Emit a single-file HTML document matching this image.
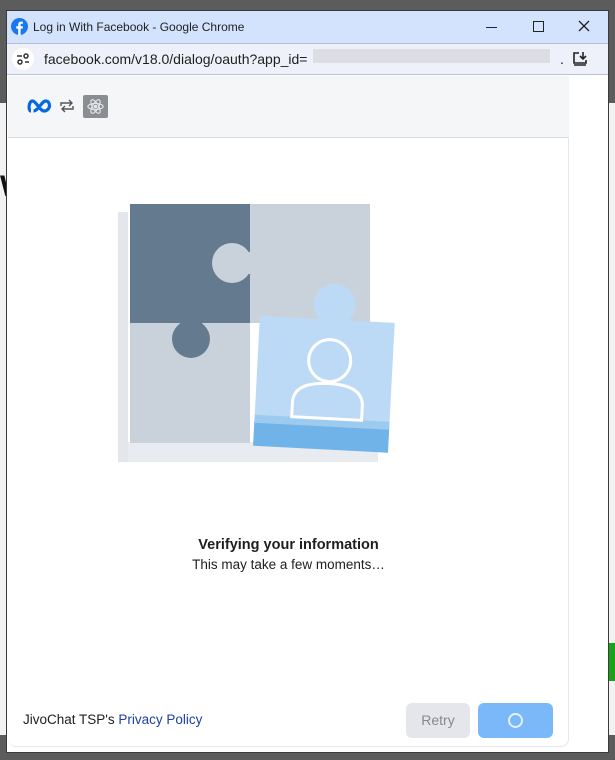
<!DOCTYPE html>
<html><head><style>
*{margin:0;padding:0;box-sizing:border-box}
body{width:615px;height:760px;background:#5c5c5c;position:relative;overflow:hidden;font-family:"Liberation Sans",Arial,sans-serif}
.bgpage{position:absolute;left:0;top:103px;width:615px;height:632px;background:#f2f2f2}
.win{position:absolute;left:6px;top:10px;width:603px;height:743px;background:#fff;border:1px solid #3a3a3a}
.title{height:32px;background:#d3e3fd;position:relative;font-size:12px;color:#1f1f1f}
.addr{height:32px;background:#eef1f9;border-top:1px solid #b8c2d4;border-bottom:1px solid #b8c2d4;position:relative;font-size:14px;color:#1f1f1f}
.hdr{position:absolute;left:1px;top:65px;width:561px;height:62px;background:#f5f6f7;border-bottom:1px solid #dadde1}
.card{position:absolute;left:1px;top:126px;width:561px;height:610px;border-right:1px solid #e4e6eb;border-bottom:1px solid #e4e6eb;border-radius:0 0 8px 8px}
</style></head><body>
<div class="bgpage"></div>
<div style="position:absolute;left:608px;top:643px;width:7px;height:38px;background:#1aa31a"></div>
<div style="position:absolute;left:0;top:170px;font:bold 30px 'Liberation Sans';color:#111">W</div>
<div class="win">
 <div class="title">
  <svg style="position:absolute;left:4px;top:7px" width="17" height="17" viewBox="0 0 17 17"><circle cx="8.5" cy="8.5" r="8.5" fill="#1877f2"/><path d="M9.6 17V10.6h2l.3-2.3H9.6V6.9c0-.7.2-1.1 1.1-1.1h1.2V3.7c-.3 0-1-.1-1.8-.1-1.8 0-2.9 1-2.9 3v1.7h-2v2.3h2V17z" fill="#fff"/></svg>
  <span style="position:absolute;left:26px;top:9px">Log in With Facebook - Google Chrome</span>
  <span style="position:absolute;left:479px;top:16px;width:11px;height:1px;background:#222"></span>
  <span style="position:absolute;left:526px;top:10px;width:11px;height:11px;border:1px solid #222"></span>
  <svg style="position:absolute;left:571px;top:9px" width="12" height="12" viewBox="0 0 12 12" stroke="#222" stroke-width="1.3"><path d="M1 1l10 10M11 1L1 11"/></svg>
 </div>
 <div class="addr">
  <div style="position:absolute;left:5px;top:4px;width:22px;height:22px;border-radius:50%;background:#fff"></div>
  <svg style="position:absolute;left:9px;top:8px" width="14" height="14" viewBox="0 0 14 14" fill="none" stroke="#333" stroke-width="1.5"><path d="M1 4h5M9 10h4"/><circle cx="10" cy="4" r="2"/><circle cx="4" cy="10" r="2"/></svg>
  <span style="position:absolute;left:37px;top:7px">facebook.com/v18.0/dialog/oauth?app_id=</span>
  <div style="position:absolute;left:306px;top:5px;width:237px;height:14px;background:#dcdee3"></div>
  <span style="position:absolute;left:553px;top:7px">.</span>
  <svg style="position:absolute;left:565px;top:7px" width="18" height="16" viewBox="0 0 18 16" fill="none" stroke="#222" stroke-width="1.6"><path d="M7 2H2v10h12V9M2 14h12M11 1v7M8 5l3 3 3-3"/></svg>
 </div>
 <div class="hdr">
  <svg style="position:absolute;left:19px;top:22px" width="26" height="16" viewBox="0 0 26 16" fill="none" stroke="#0668e1" stroke-width="3.2"><path d="M4 13C1 13 1.5 3 5.5 3 9 3 13 13 17 13c3.5 0 5.5-3 5.5-5.5S21 3 18.5 3C15 3 11 13 6.5 13"/></svg>
  <svg style="position:absolute;left:51px;top:22px" width="16" height="16" viewBox="0 0 16 16" fill="none" stroke="#555" stroke-width="1.4"><path d="M2 8V5h11M10 2l3 3-3 3M14 8v3H3M6 14l-3-3 3-3"/></svg>
  <div style="position:absolute;left:75px;top:19px;width:25px;height:23px;background:#8a8d91;border-radius:2px"></div>
  <svg style="position:absolute;left:78px;top:21px" width="19" height="19" viewBox="0 0 20 20" fill="none" stroke="#e4e6eb" stroke-width="1.2"><ellipse cx="10" cy="10" rx="8" ry="3.2"/><ellipse cx="10" cy="10" rx="8" ry="3.2" transform="rotate(60 10 10)"/><ellipse cx="10" cy="10" rx="8" ry="3.2" transform="rotate(-60 10 10)"/><circle cx="10" cy="10" r="1.3" fill="#e4e6eb"/></svg>
 </div>
 <div class="card">
  <svg style="position:absolute;left:100px;top:55px" width="300" height="290" viewBox="0 0 300 290">
   <rect x="10" y="20" width="10" height="250" fill="#e3e7ec"/>
   <rect x="20" y="250" width="250" height="20" fill="#e8ebef"/>
   <rect x="22" y="12" width="120" height="119" fill="#637a8f"/>
   <rect x="142" y="12" width="120" height="119" fill="#c9d2da"/>
   <rect x="22" y="131" width="120" height="120" fill="#c9d2da"/>
   <rect x="118" y="60" width="26" height="22" fill="#c9d2da"/>
   <circle cx="124" cy="71" r="20" fill="#c9d2da"/>
   <rect x="72" y="125" width="22" height="12" fill="#637a8f"/>
   <circle cx="83" cy="147" r="19" fill="#637a8f"/>
   <g transform="rotate(3 210 200)">
    <rect x="148" y="127" width="135" height="130" fill="#bcdaf5"/>
    <circle cx="222" cy="112" r="21" fill="#bcdaf5"/>
    <rect x="148" y="232" width="135" height="25" fill="#6fb3e8"/>
    <rect x="148" y="226" width="135" height="8" fill="#9dcbf0"/>
    <circle cx="220" cy="168" r="21" fill="none" stroke="#fff" stroke-width="3"/>
    <path d="M185 226v-14c0-14 12-21 35-21s35 7 35 21v14z" fill="none" stroke="#fff" stroke-width="3"/>
   </g>
  </svg>
  <div style="position:absolute;left:0;width:561px;top:400px;text-align:center;font-weight:bold;font-size:14.5px;color:#1c1e21">Verifying your information</div>
  <div style="position:absolute;left:0;width:561px;top:420px;text-align:center;font-size:13.5px;color:#1c1e21">This may take a few moments…</div>
  <div style="position:absolute;left:15px;top:575px;font-size:13.5px;color:#1c1e21">JivoChat TSP's <span style="color:#1d3fa8">Privacy Policy</span></div>
  <div style="position:absolute;left:398px;top:566px;width:64px;height:35px;background:#e4e6eb;border-radius:6px;color:#888;font-size:14px;text-align:center;line-height:35px">Retry</div>
  <div style="position:absolute;left:470px;top:566px;width:75px;height:35px;background:#7ab8f9;border-radius:6px"><div style="position:absolute;left:30px;top:10px;width:15px;height:15px;border:2px solid #e3f0fd;border-radius:50%"></div></div>
 </div>
</div>
</body></html>
